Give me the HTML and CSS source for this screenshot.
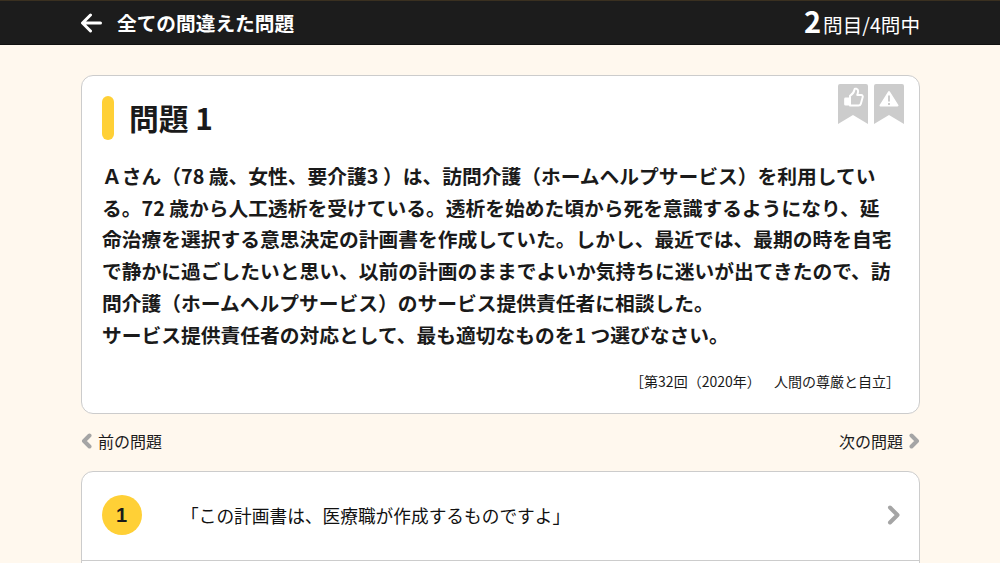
FILE: index.html
```html
<!DOCTYPE html>
<html lang="ja">
<head>
    <meta charset="UTF-8">
    <meta name="viewport" content="width=device-width, initial-scale=1.0">
    <title>全ての間違えた問題</title>
    <link rel="stylesheet" href="styles.css">
</head>
<body>
    <header class="top-bar">
        <div class="top-title">
            <svg class="back-icon" width="22" height="20" viewBox="0 0 22 20">
                <path d="M10.500 2 L2.500 10 L10.500 18 M3 10 H20.500" fill="none" stroke="#fff" stroke-width="3" stroke-linecap="round" stroke-linejoin="round"/>
            </svg>
            <h1>全ての間違えた問題</h1>
        </div>
        <div class="counter"><b>2</b>問目/4問中</div>
    </header>

    <main>
        <section class="card question">
            <div class="ribbons">
                <svg width="30" height="40" viewBox="0 0 30 40">
                    <path d="M2 0 H28 a2 2 0 0 1 2 2 V40 L15 31 L0 40 V2 a2 2 0 0 1 2-2z" fill="#ccc"/>
                    <g transform="translate(3 1) scale(.9)">
                        <path d="M10 12 c2.500-1.500 4.500-4 5-7 .3-1.500 4-1.500 4 1.800 0 1.500-.4 3-1 4.200 h4.300 c1.700 0 2.300 1.700 1.700 3 l-2 7 c-.4 1.200-1.200 1.800-2.500 1.800 h-9.500z" fill="none" stroke="#fff" stroke-width="2.200" stroke-linejoin="round"/>
                        <path d="M5 14 h4 v8.800 h-4 a1.500 1.500 0 0 1 -1.500-1.500 v-5.800 a1.500 1.500 0 0 1 1.500-1.500z" fill="#fff"/>
                    </g>
                </svg>
                <svg width="30" height="40" viewBox="0 0 30 40">
                    <path d="M2 0 H28 a2 2 0 0 1 2 2 V40 L15 31 L0 40 V2 a2 2 0 0 1 2-2z" fill="#ccc"/>
                    <path d="M15 8 L23.500 21.500 H6.500z" fill="#fff" stroke="#fff" stroke-width="2" stroke-linejoin="round"/>
                    <path d="M15 11.500 V17.500 M15 19 V21" stroke="#ccc" stroke-width="2"/>
                </svg>
            </div>
            <div class="question-head">
                <span class="mark"></span>
                <h2>問題 1</h2>
            </div>
            <p class="question-text">
                Ａさん（78 歳、女性、要介護3 ）は、訪問介護（ホームヘルプサービス）を利用している。72 歳から人工透析を受けている。透析を始めた頃から死を意識するようになり、延命治療を選択する意思決定の計画書を作成していた。しかし、最近では、最期の時を自宅で静かに過ごしたいと思い、以前の計画のままでよいか気持ちに迷いが出てきたので、訪問介護（ホームヘルプサービス）のサービス提供責任者に相談した。<br>サービス提供責任者の対応として、最も適切なものを1 つ選びなさい。
            </p>
            <p class="source">［第32回（2020年）　&nbsp;&nbsp;人間の尊厳と自立］</p>
        </section>

        <nav class="pager">
            <a class="pager-link">
                <svg width="11" height="16" viewBox="0 0 11 16"><path d="M8.500 2.500 L3 8 L8.500 13.500" fill="none" stroke="#a5a5a5" stroke-width="4" stroke-linecap="round" stroke-linejoin="round"/></svg>
                前の問題
            </a>
            <a class="pager-link">
                次の問題
                <svg width="11" height="16" viewBox="0 0 11 16"><path d="M2.500 2.500 L8 8 L2.500 13.500" fill="none" stroke="#a5a5a5" stroke-width="4" stroke-linecap="round" stroke-linejoin="round"/></svg>
            </a>
        </nav>

        <section class="card answers">
            <div class="answer">
                <span class="answer-no">1</span>
                <span class="answer-text">「この計画書は、医療職が作成するものですよ」</span>
                <svg width="14" height="20" viewBox="0 0 14 20"><path d="M3 2.500 L10.500 10 L3 17.500" fill="none" stroke="#a5a5a5" stroke-width="4" stroke-linecap="round" stroke-linejoin="round"/></svg>
            </div>
            <div class="answer"></div>
        </section>
    </main>
</body>
</html>
```
FILE: styles.css
```css
html, body { height: 100%; overflow: hidden; }
body { margin: 0; background-color: #fff8ee; color: #1a1a1a; font-family: "Noto Sans CJK JP", "Noto Sans", sans-serif; }

.top-bar {
    display: flex;
    justify-content: space-between;
    align-items: center;
    height: 43px;
    padding: 0 80px;
    background-color: #1c1c1c;
    border-top: 1px solid #3a3020;
    border-bottom: 1px solid #111;
    color: white;
}
.top-title { display: flex; align-items: center; gap: 15px; }
.top-title h1 { margin: 0; font-size: 19.7px; font-weight: 700; }
.back-icon { display: block; }
.counter { font-size: 19.6px; line-height: 43px; }
.counter b { font-size: 29px; margin-right: 2px; }

main { padding: 30px 80px 0 81px; }

.card { background-color: white; border: 1px solid #ccc; border-radius: 12px; }

.question { position: relative; height: 317px; padding: 20px 20px 0; width: 797px; }
.ribbons { position: absolute; top: 8px; right: 15px; display: flex; gap: 6px; }

.question-head { display: flex; align-items: center; gap: 15px; height: 44px; }
.mark { width: 12px; height: 44px; border-radius: 6px; background-color: #ffd036; }
.question-head h2 { margin: -2px 0 0; font-size: 29.8px; font-weight: 700; }

.question-text { margin: 20px 5px 0 0; font-size: 19.75px; line-height: 31.7px; font-weight: 700; }
.source { margin: 21px -1px 0 0; text-align: right; font-size: 14px; }

.pager { display: flex; justify-content: space-between; align-items: center; height: 57px; padding-bottom: 3px; box-sizing: border-box; font-size: 16px; }
.pager-link { display: flex; align-items: center; gap: 6px; }

.answer { display: flex; align-items: center; height: 88px; padding: 0 18px 3px 20px; box-sizing: border-box; }
.answer + .answer { border-top: 1px solid #ccc; }
.answer-no {
    width: 40px;
    height: 40px;
    border-radius: 50%;
    background-color: #ffd036;
    text-align: center;
    font: 700 20px/40px "Liberation Sans", sans-serif;
    text-indent: -1px;
}
.answer-text { flex: 1; margin-left: 39px; font-size: 17.7px; color: #111; }
```
